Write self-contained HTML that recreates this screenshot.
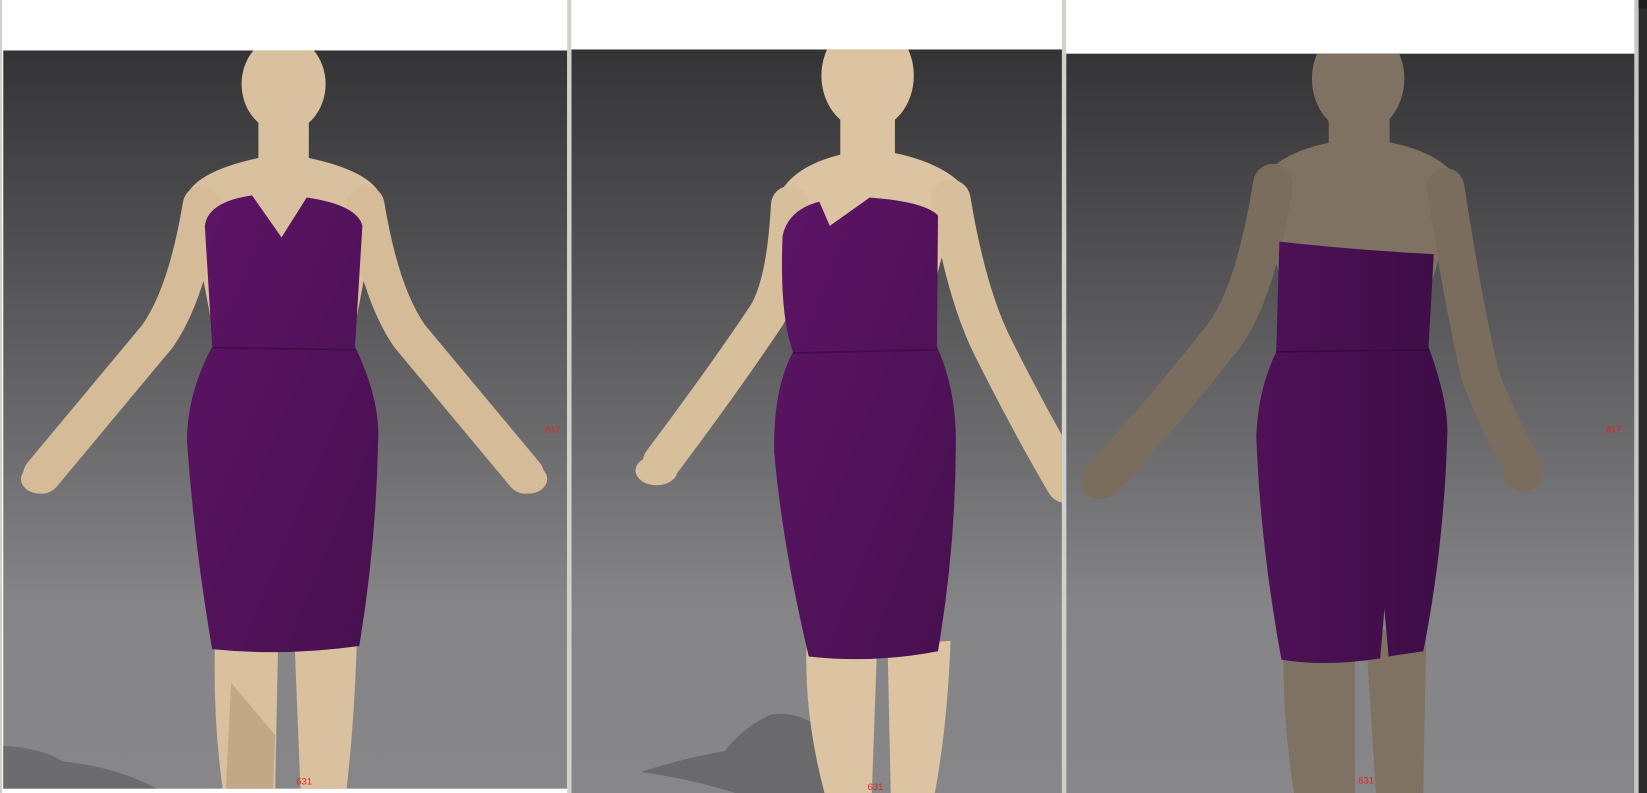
<!DOCTYPE html>
<html><head><meta charset="utf-8"><style>
html,body{margin:0;padding:0;background:#fff;width:1647px;height:793px;overflow:hidden}
svg{display:block}
text{font-family:"Liberation Sans",sans-serif;font-size:9px;fill:#e0281e}
</style></head><body>
<svg width="1647" height="793" viewBox="0 0 1568 755" preserveAspectRatio="none">
<defs>
<linearGradient id="bg" x1="0" y1="0" x2="0" y2="1">
<stop offset="0" stop-color="#343437"/><stop offset="0.55" stop-color="#6e6e70"/><stop offset="0.75" stop-color="#858587"/><stop offset="1" stop-color="#878789"/>
</linearGradient>
<linearGradient id="dr" x1="0" y1="0" x2="1" y2="1">
<stop offset="0" stop-color="#5e1466"/><stop offset="1" stop-color="#47104f"/>
</linearGradient>
<linearGradient id="drb" x1="0" y1="0" x2="1" y2="0">
<stop offset="0" stop-color="#4e1157"/><stop offset="1" stop-color="#3e0d46"/>
</linearGradient>
<clipPath id="c1"><rect x="3" y="48" width="537" height="703"/></clipPath>
<clipPath id="c2"><rect x="544" y="47" width="467" height="708"/></clipPath>
<clipPath id="c3"><rect x="1015" y="51" width="541" height="704"/></clipPath>
</defs>
<rect width="1568" height="755" fill="#fff"/>
<rect x="540" y="0" width="4" height="755" fill="#d0d0cc"/>
<rect x="1011" y="0" width="4" height="755" fill="#d0d0cc"/>
<rect x="0" y="0" width="2" height="755" fill="#d0d0cc"/>
<rect x="1556" y="0" width="4" height="755" fill="#c8c8c0"/>
<rect x="1560" y="0" width="8" height="755" fill="#2c2c2e"/>
<rect x="1560" y="0" width="8" height="8" fill="#1c1c1c"/>

<!-- PANEL 1 -->
<g clip-path="url(#c1)">
<rect x="3" y="48" width="537" height="703" fill="url(#bg)"/>
<path d="M3,710 Q40,712 60,725 Q110,730 150,751 L3,751Z" fill="#6c6c6e"/>
<g fill="#d9c09e">
<ellipse cx="270" cy="80" rx="40" ry="46"/>
<rect x="246" y="105" width="48" height="60"/>
<path d="M178,185 Q190,162 248,150 L292,150 Q350,162 362,185 L340,300 L200,300Z"/>
<path d="M205,600 L265,600 L262,751 L212,751 Q202,680 205,600Z"/>
<path d="M280,600 L340,600 Q338,680 330,751 L286,751Z"/>
</g>
<path d="M220,650 L262,700 L260,751 L215,751Z" fill="#c2a886"/>
<g fill="none" stroke="#d5bb98" stroke-linecap="round" stroke-linejoin="round">
<path d="M192,195 Q178,280 150,320 Q100,380 40,452" stroke-width="36"/>
<path d="M348,195 Q362,280 390,320 Q440,380 500,452" stroke-width="36"/>
</g>
<ellipse cx="38" cy="456" rx="18" ry="14" fill="#d5bb98"/>
<ellipse cx="503" cy="456" rx="18" ry="14" fill="#d5bb98"/>
<path d="M195,215 Q198,192 240,186 L268,226 L292,188 Q340,195 345,215 L338,330 Q362,380 360,420 Q358,520 342,615 Q270,625 202,618 Q185,520 178,420 Q178,375 202,330Z" fill="url(#dr)"/>
<path d="M203,331 L338,333" stroke="#3e0c45" stroke-width="1.5"/>
<text x="519" y="412">817</text><text x="282" y="747">631</text>
</g>

<!-- PANEL 2 -->
<g clip-path="url(#c2)">
<rect x="544" y="47" width="467" height="708" fill="url(#bg)"/>
<path d="M610,735 Q650,722 690,715 Q710,690 735,680 Q760,678 775,690 L790,755 L700,755 Q660,742 610,735Z" fill="#6a6a6c"/>
<g fill="#dcc4a2">
<ellipse cx="826" cy="72" rx="44" ry="52"/>
<rect x="800" y="100" width="52" height="70"/>
<path d="M742,185 Q760,150 830,142 Q890,150 915,175 L890,270 L760,270Z"/>
<path d="M768,610 L835,615 L830,755 L785,755 Q765,680 768,610Z"/>
<path d="M845,615 L905,610 Q902,690 890,755 L848,755Z"/>
</g>
<g fill="none" stroke="#d8bf9c" stroke-linecap="round" stroke-linejoin="round">
<path d="M752,195 Q748,270 730,300 Q690,360 630,440" stroke-width="36"/>
<path d="M905,190 Q920,280 945,330 Q980,400 1015,460" stroke-width="38"/>
</g>
<ellipse cx="625" cy="448" rx="20" ry="14" fill="#d8bf9c"/>
<path d="M745,225 Q750,200 780,192 L790,215 L828,188 Q880,192 893,205 L892,330 Q910,370 910,420 Q910,520 893,620 Q830,632 770,625 Q745,520 737,430 Q736,370 755,335 Q742,300 745,225Z" fill="url(#dr)"/>
<path d="M755,336 L891,333" stroke="#3e0c45" stroke-width="1.5"/>
<text x="826" y="752">631</text>
</g>

<!-- PANEL 3 -->
<g clip-path="url(#c3)">
<rect x="1015" y="51" width="541" height="704" fill="url(#bg)"/>
<g fill="#7f7262">
<ellipse cx="1293" cy="75" rx="44" ry="52"/>
<rect x="1265" y="95" width="58" height="60"/>
<path d="M1198,175 Q1215,145 1270,135 L1320,135 Q1375,145 1390,175 L1360,280 L1222,280Z"/>
<path d="M1222,600 L1290,600 L1290,755 L1232,755 Q1220,680 1222,600Z"/>
<path d="M1300,600 L1358,600 Q1356,690 1355,755 L1310,755Z"/>
</g>
<g fill="none" stroke="#7a6d5d" stroke-linecap="round" stroke-linejoin="round">
<path d="M1212,175 Q1195,280 1165,320 Q1110,390 1050,455" stroke-width="38"/>
<path d="M1376,178 Q1395,300 1410,360 Q1430,410 1450,445" stroke-width="36"/>
</g>
<ellipse cx="1047" cy="460" rx="18" ry="15" fill="#7a6d5d"/>
<ellipse cx="1450" cy="452" rx="18" ry="16" fill="#7a6d5d"/>
<path d="M1218,230 Q1290,238 1365,242 L1360,330 Q1378,380 1378,410 Q1375,520 1355,620 L1322,625 L1318,580 L1314,627 Q1260,635 1220,628 Q1200,520 1196,415 Q1198,370 1215,335Z" fill="url(#drb)"/>
<path d="M1215,335 L1360,333" stroke="#350a3c" stroke-width="1.5"/>
<text x="1529" y="412">817</text><text x="1293" y="746">631</text>
</g>
</svg>
</body></html>
